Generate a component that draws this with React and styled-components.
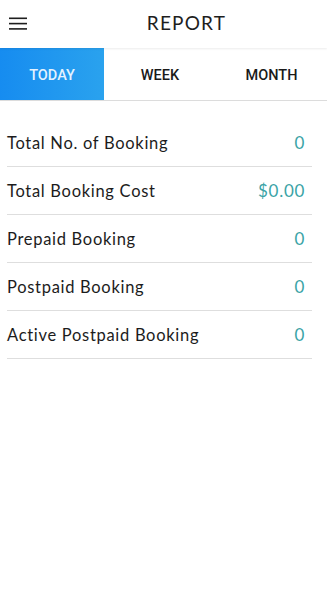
import React from "react";
import styled, { createGlobalStyle } from "styled-components";

const Global = createGlobalStyle`
  html, body { margin: 0; padding: 0; background: #fff; }
  body { font-family: "Open Sans", "Liberation Sans", sans-serif; }
  * { box-sizing: border-box; }
`;

const Page = styled.div`
  width: 327px;
  min-height: 592px;
  background: #fff;
  display: flex;
  flex-direction: column;
`;

const Header = styled.header`
  height: 48px;
  display: flex;
  align-items: center;
  position: relative;
  z-index: 1;
  box-shadow: 0 1px 2px rgba(0, 0, 0, 0.08);
`;

const MenuButton = styled.button`
  width: 46px;
  height: 48px;
  border: 0;
  background: transparent;
  padding: 0 0 0 9px;
  display: flex;
  align-items: center;
`;

const Title = styled.h1`
  flex: 1;
  margin: 0 0 3px;
  text-align: center;
  font-family: "Lato", "Open Sans", sans-serif;
  font-weight: 400;
  font-size: 19px;
  letter-spacing: 1.2px;
  color: #1e1e1e;
`;

const Tabs = styled.nav`
  height: 53px;
  display: flex;
  border-bottom: 1px solid #dcdcdc;
`;

const Tab = styled.div`
  width: ${(p) => p.$w}px;
  flex: none;
  display: flex;
  align-items: center;
  justify-content: center;
  font-family: "Roboto", sans-serif;
  font-weight: 500;
  font-size: 14.5px;
  color: ${(p) => (p.$active ? "#e3f2ff" : "#1a1a1a")};
  background: ${(p) =>
    p.$active ? "linear-gradient(90deg, #168cf0 0%, #2aa2ee 100%)" : "transparent"};
  padding-top: 2px;
`;

const List = styled.div`
  padding: 18px 15px 0 7px;
  display: flex;
  flex-direction: column;
`;

const Row = styled.div`
  height: 48px;
  display: flex;
  align-items: center;
  justify-content: space-between;
  border-bottom: 1px solid #dedede;
  padding: 0 7px 0 0;
`;

const Label = styled.span`
  font-family: "Lato", "Open Sans", sans-serif;
  font-size: 16.5px;
  letter-spacing: 0.7px;
  color: #1c1c1c;
`;

const Value = styled.span`
  font-family: "Lato", "Open Sans", sans-serif;
  font-size: 17px;
  letter-spacing: 0.7px;
  color: #3aa3a6;
`;

const rows = [
  ["Total No. of Booking", "0"],
  ["Total Booking Cost", "$0.00"],
  ["Prepaid Booking", "0"],
  ["Postpaid Booking", "0"],
  ["Active Postpaid Booking", "0"],
];

export default function App() {
  return (
    <Page>
      <Global />
      <Header>
        <MenuButton aria-label="menu">
          <svg width="19" height="14" viewBox="0 0 19 14">
            <rect x="0" y="0.5" width="18" height="1.6" fill="#1e1e1e" />
            <rect x="0" y="5.8" width="18" height="1.6" fill="#1e1e1e" />
            <rect x="0" y="11.1" width="18" height="1.6" fill="#1e1e1e" />
          </svg>
        </MenuButton>
        <Title>REPORT</Title>
      </Header>
      <Tabs>
        <Tab $active $w={104}>TODAY</Tab>
        <Tab $w={112}>WEEK</Tab>
        <Tab $w={111}>MONTH</Tab>
      </Tabs>
      <List>
        {rows.map(([l, v]) => (
          <Row key={l}>
            <Label>{l}</Label>
            <Value>{v}</Value>
          </Row>
        ))}
      </List>
    </Page>
  );
}
